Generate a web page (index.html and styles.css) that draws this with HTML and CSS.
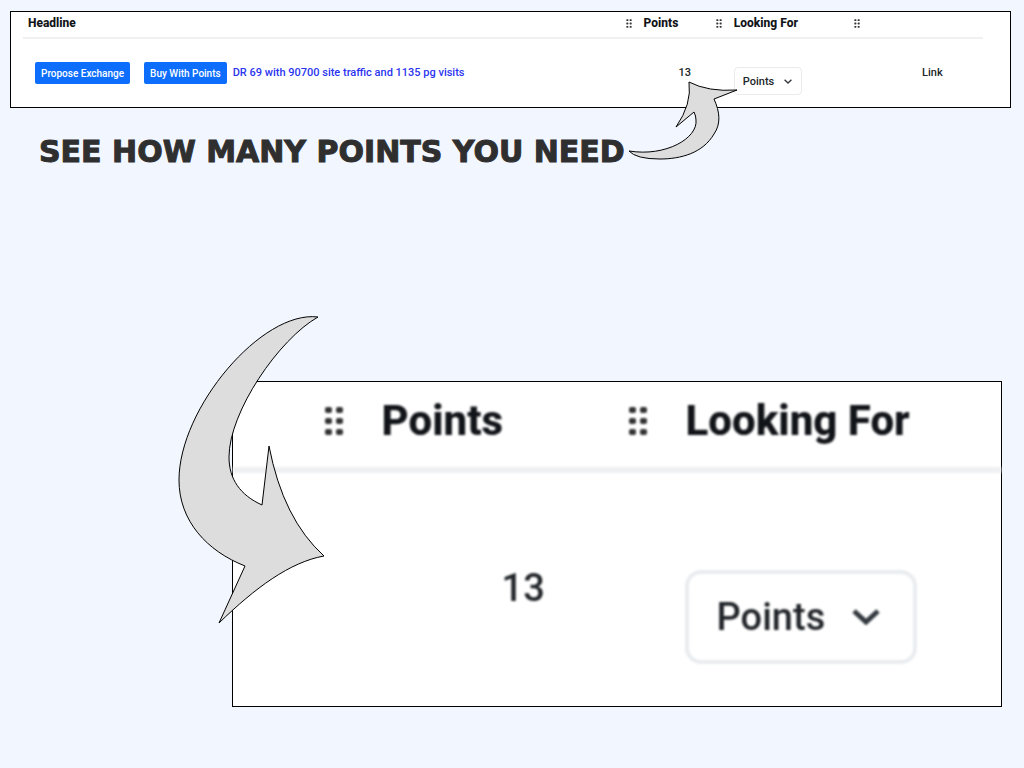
FILE: index.html
```html
<!DOCTYPE html>
<html lang="en">
<head>
<meta charset="utf-8">
<meta name="viewport" content="width=device-width, initial-scale=1">
<title>See how many points you need</title>
<link rel="stylesheet" href="styles.css">
</head>
<body>
<svg class="defs" width="0" height="0" aria-hidden="true">
  <symbol id="grip" viewBox="0 0 20 30">
    <rect x="1" y="1" width="7" height="6" rx="2"/><rect x="12" y="1" width="7" height="6" rx="2"/>
    <rect x="1" y="12" width="7" height="6" rx="2"/><rect x="12" y="12" width="7" height="6" rx="2"/>
    <rect x="1" y="23" width="7" height="6" rx="2"/><rect x="12" y="23" width="7" height="6" rx="2"/>
  </symbol>
  <symbol id="chevron" viewBox="0 0 28 16">
    <path d="M2 2 L14 13 L26 2" fill="none" stroke="currentColor" stroke-width="5"/>
  </symbol>
</svg>
<main class="page">
  <section class="panel listing">
    <table class="grid">
      <colgroup><col class="col-headline"><col class="col-points"><col class="col-looking"><col></colgroup>
      <thead>
        <tr>
          <th scope="col"><div class="head"><span>Headline</span><svg class="grip"><use href="#grip"/></svg></div></th>
          <th scope="col"><div class="head"><span>Points</span><svg class="grip"><use href="#grip"/></svg></div></th>
          <th scope="col"><div class="head"><span>Looking For</span><svg class="grip"><use href="#grip"/></svg></div></th>
          <td></td>
        </tr>
      </thead>
      <tbody>
        <tr>
          <td>
            <div class="offer">
              <button class="btn" type="button">Propose Exchange</button>
              <button class="btn" type="button">Buy With Points</button>
              <a class="title" href="#">DR 69 with 90700 site traffic and 1135 pg visits</a>
            </div>
          </td>
          <td class="count">13</td>
          <td class="choice">
            <div class="picker">
              <select aria-label="Looking for"><option>Points</option></select>
              <svg class="chevron"><use href="#chevron"/></svg>
            </div>
          </td>
          <td class="kind">Link</td>
        </tr>
      </tbody>
    </table>
  </section>

  <div class="callout">
    <h1>SEE HOW MANY POINTS YOU NEED</h1>
    <svg class="arrow arrow-up" viewBox="626 78 114 84" aria-hidden="true">
      <path d="M629 151 C666 157 698 138 696 120 Q696 116 694 112 L676 127 Q692 104 689 82 Q708 92 737 90 L714 99 C720 112 721 124 714 134 C703 153 681 159 660 159 Q636 159 629 151 Z"/>
    </svg>
  </div>

  <section class="panel closeup">
    <table class="grid">
      <colgroup><col class="col-edge"><col class="col-wide"><col></colgroup>
      <thead>
        <tr>
          <td><div class="head"><span></span><svg class="grip"><use href="#grip"/></svg></div></td>
          <th scope="col"><div class="head"><span>Points</span><svg class="grip"><use href="#grip"/></svg></div></th>
          <th scope="col"><div class="head"><span>Looking For</span></div></th>
        </tr>
      </thead>
      <tbody>
        <tr>
          <td></td>
          <td class="count">13</td>
          <td class="choice">
            <div class="picker">
              <select aria-label="Looking for, enlarged"><option>Points</option></select>
              <svg class="chevron"><use href="#chevron"/></svg>
            </div>
          </td>
        </tr>
      </tbody>
    </table>
    <svg class="arrow arrow-down" viewBox="176 314 152 312" aria-hidden="true">
      <path d="M318 317 C262 310 179 408 179 480 C179 521 207 551 245 566 L219 623 C255 588 290 562 324 556 Q283 519 269 446 L262 505 C240 495 229 479 229 457 C229 412 279 339 318 317 Z"/>
    </svg>
  </section>
</main>
</body>
</html>
```
FILE: styles.css
```css
* { box-sizing: border-box; }

body {
  margin: 0;
  background: #f1f6ff;
  color: #212529;
  font-family: Roboto, "Liberation Sans", sans-serif;
}

.defs { position: absolute; }

.page {
  display: flex;
  flex-direction: column;
  padding: 11px 13px 24px 10px;
}

.panel {
  background: #fff;
  border: 1px solid #000;
}

.grid {
  width: 100%;
  border-collapse: collapse;
  table-layout: fixed;
}

.grid th,
.grid td {
  padding: 0;
  text-align: left;
  vertical-align: top;
}

.head {
  display: flex;
  align-items: center;
  justify-content: space-between;
}

.grid th { color: #111418; font-weight: 800; }

.grip { flex: none; fill: #333; }

.picker { display: inline-grid; align-items: center; }

.picker select,
.picker .chevron { grid-area: 1 / 1; }

.picker select {
  appearance: none;
  width: 100%;
  margin: 0;
  background: #fff;
  color: #212529;
  font-family: inherit;
  font-weight: 500;
}

.chevron {
  justify-self: end;
  color: #343a40;
  pointer-events: none;
}

/* Listing row */
.listing { padding: 0 27px 12px 12px; font-size: 11px; font-weight: 500; }
.col-headline { width: 63.5%; }
.col-points { width: 9.4%; }
.col-looking { width: 14.4%; }

.listing thead tr { border-bottom: 2px solid #eef0f2; }
.listing thead th { padding: 3px 1px 6px 11px; font-size: 12px; line-height: 16px; }
.listing thead th:first-child { padding-left: 5px; }
.listing .grip { width: 6px; height: 9px; }
.listing tbody td { padding-top: 23px; line-height: 20px; }

.offer { display: flex; align-items: center; padding-left: 12px; }

.btn {
  height: 22px;
  padding: 0 6px;
  border: 0;
  border-radius: 2px;
  background: #0d6efd;
  color: #fff;
  font-family: inherit;
  font-size: 10px;
  font-weight: 500;
  white-space: nowrap;
}

.btn + .btn { margin-left: 14px; }

.title {
  margin-left: 6px;
  color: #2b35f0;
  font-size: 11px;
  text-decoration: none;
  white-space: nowrap;
}

.listing .count { padding: 24px 0 0 46px; }
.listing tbody .choice { padding: 28px 0 0 11px; }
.listing .picker { width: 68px; }
.listing select {
  height: 28px;
  padding: 0 8px;
  border: 1px solid #e9ecef;
  border-radius: 4px;
  font-size: 11px;
}
.listing .chevron { width: 8px; height: 5px; margin-right: 10px; }
.listing .kind { padding: 24px 0 0 61px; }

/* Caption and arrows */
.callout {
  display: flex;
  position: relative;
  align-self: flex-start;
  padding: 24px 0 0 29px;
}

.callout h1 {
  margin: 0;
  color: #2f2f2f;
  font: 700 30px/40px "DejaVu Sans", Inter, sans-serif;
  -webkit-text-stroke: 1px #2f2f2f;
  white-space: nowrap;
}

.arrow {
  position: absolute;
  fill: #ddd;
  stroke: #000;
  stroke-width: 1;
}

.arrow-up { left: 616px; top: -30px; width: 114px; height: 84px; }
.arrow-down { left: -57px; top: -68px; width: 152px; height: 312px; }

/* Enlarged detail */
.closeup {
  position: relative;
  align-self: flex-end;
  width: 76.9%;
  margin: 209px 9px 0 0;
  padding-bottom: 42px;
}

.closeup .grid { filter: blur(1px); }
.col-edge { width: 14.5%; }
.col-wide { width: 39.6%; }

.closeup thead tr { border-bottom: 6px solid #eef0f2; }
.closeup thead th,
.closeup thead td { height: 88px; padding: 14px 1px 0 37px; font-size: 42px; line-height: 50px; }
.closeup .head { min-height: 50px; }
.closeup .grip { width: 20px; height: 30px; }
.closeup .count { padding: 88px 0 0 157px; font-size: 38px; font-weight: 500; line-height: 54px; }
.closeup .choice { padding: 97px 0 0 36px; }
.closeup .picker { width: 232px; }
.closeup select {
  height: 94px;
  padding: 0 28px;
  border: 4px solid #e9ecef;
  border-radius: 16px;
  font-size: 38px;
}
.closeup .chevron { width: 28px; height: 16px; margin-right: 37px; }
```
